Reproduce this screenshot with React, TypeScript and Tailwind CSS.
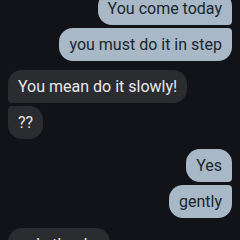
type Msg = { text: string; out: boolean; shape: string; gap?: string };

const msgs: Msg[] = [
  { text: 'You come today', out: true, shape: 'rounded-[14px] rounded-br-[4px]' },
  { text: 'you must do it in step', out: true, shape: 'rounded-[14px] rounded-tr-[4px]' },
  { text: 'You mean do it slowly!', out: false, shape: 'rounded-[14px] rounded-bl-[4px]', gap: 'mt-[6px]' },
  { text: '??', out: false, shape: 'rounded-[14px] rounded-tl-[4px]' },
  { text: 'Yes', out: true, shape: 'rounded-[14px] rounded-br-[4px]', gap: 'mt-[7px]' },
  { text: 'gently', out: true, shape: 'rounded-[14px] rounded-tr-[4px]' },
  { text: 'ooh, thanks', out: false, shape: 'rounded-[14px] rounded-bl-[4px]', gap: 'mt-[7px]' },
];

export default function App() {
  return (
    <div className="w-[240px] h-[240px] overflow-hidden bg-[#111318] font-['Roboto',sans-serif]">
      <div className="flex flex-col gap-[3px] px-2 -mt-2">
        {msgs.map((m, i) => (
          <div key={i} className={`flex ${m.out ? 'justify-end' : 'justify-start'} ${m.gap ?? ''}`}>
            <div
              className={`px-[10px] py-[7px] text-[16px] leading-[19px] ${m.shape} ${
                m.out ? 'bg-[#a8b8c6] text-[#1b252e]' : 'bg-[#2a2c30] text-[#e8e8ea]'
              }`}
            >
              {m.text}
            </div>
          </div>
        ))}
      </div>
    </div>
  );
}
